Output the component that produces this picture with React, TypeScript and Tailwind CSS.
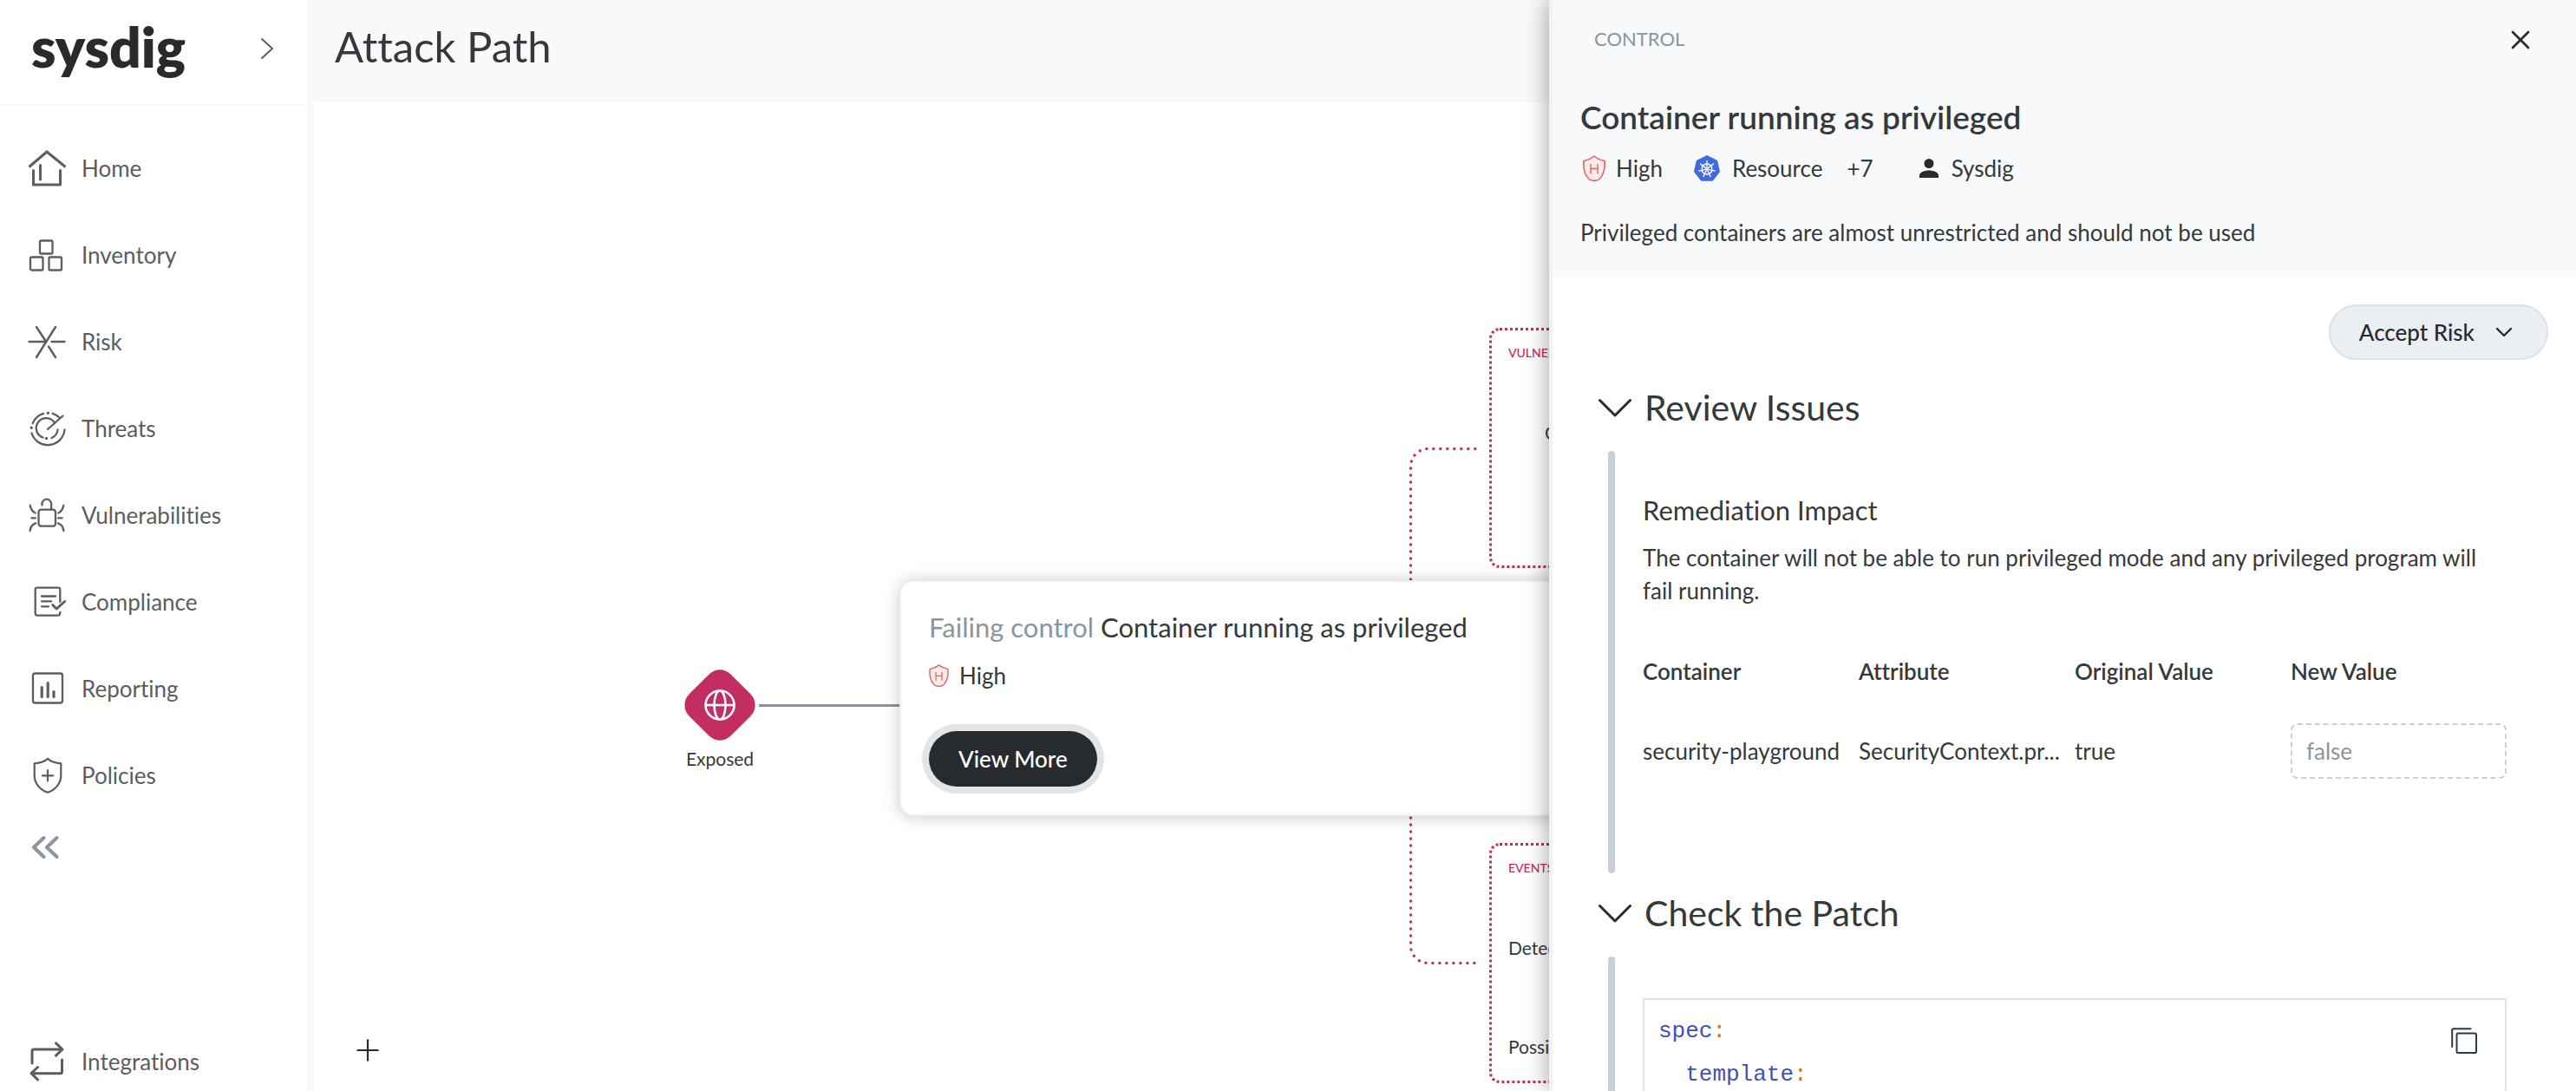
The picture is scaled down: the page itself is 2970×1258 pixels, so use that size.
import type { ReactNode } from "react";
import { ChevronDown, Plus, X } from "lucide-react";

function NavIcon({ width = 2, children }: { width?: number; children: ReactNode }) {
  return (
    <svg
      viewBox="0 0 44 44"
      className="size-11 shrink-0 overflow-visible"
      fill="none"
      stroke="currentColor"
      strokeWidth={width}
      strokeLinecap="round"
      strokeLinejoin="round"
      aria-hidden="true"
    >
      {children}
    </svg>
  );
}

const NAV: { label: string; icon: ReactNode }[] = [
  {
    label: "Home",
    icon: (
      <NavIcon width={3}>
        <path d="M1.5 20.5 22 3l21.5 17.5" strokeLinecap="butt" strokeLinejoin="miter" />
        <path d="M6.5 24.500V41h31V24.500M14.500 18.500V35" />
      </NavIcon>
    ),
  },
  {
    label: "Inventory",
    icon: (
      <NavIcon width={2.3}>
        <rect x="14" y="5.500" width="14.500" height="15" rx="1.500" />
        <rect x="3" y="24.500" width="14.500" height="15" rx="1.500" />
        <rect x="24.500" y="24.500" width="14.500" height="15" rx="1.500" />
      </NavIcon>
    ),
  },
  {
    label: "Risk",
    icon: (
      <NavIcon width={2.400}>
        <path d="M1.500 22H20M27.500 22H42.500M10 40 32 5M10 5 20.500 21M24 27.500 32 40" />
      </NavIcon>
    ),
  },
  {
    label: "Threats",
    icon: (
      <NavIcon width={2.300}>
        <path d="M42.500 23.500A19.500 19.500 0 0 1 4.500 27.500M5.700 16A19.500 19.500 0 0 1 18 4.800M28.700 4.800A19.500 19.500 0 0 1 36.500 9.500" />
        <path d="M31 15.500A11.500 11.500 0 1 0 17.500 32.500M34.500 23.500A11.500 11.500 0 0 1 27.500 33" />
        <path d="M23 23 40.500 7.500" />
        <g fill="currentColor" stroke="none">
          <circle cx="23.300" cy="4.300" r="1.700" />
          <circle cx="4.300" cy="21.300" r="1.700" />
          <circle cx="21.500" cy="33.500" r="1.700" />
        </g>
      </NavIcon>
    ),
  },
  {
    label: "Vulnerabilities",
    icon: (
      <NavIcon width={2.300}>
        <rect x="12.500" y="15.700" width="19.500" height="19" rx="3" />
        <path d="M16.500 10.500V9a5.300 5.300 0 0 1 10.600 0v6.500" />
        <path d="M2.700 10.700C3.500 15 5.500 18 8.700 19.500M4.300 25.300h4.700M2.700 40C3 36 5.500 32.500 9 31.300" />
        <path d="M41.300 10.700C40.500 15 38.500 18 35.300 19.500M39.700 25.300H35M41.300 40C41 36 38.500 32.500 35 31.300" />
      </NavIcon>
    ),
  },
  {
    label: "Compliance",
    icon: (
      <NavIcon width={2.300}>
        <path d="M37.300 22V8a2.300 2.300 0 0 0-2.300-2.300H11A2.300 2.300 0 0 0 8.700 8v27.300a2.300 2.300 0 0 0 2.300 2.300h24c1.500 0 2.300-1.300 2.300-3.600" />
        <path d="M16 15.500h16M16 21.300h11M16 27.300h8" />
        <path d="m28.700 25.500 4.500 4.500 9.500-8.500" strokeWidth="3" />
      </NavIcon>
    ),
  },
  {
    label: "Reporting",
    icon: (
      <NavIcon width={2.300}>
        <rect x="6" y="4.500" width="34" height="34" rx="2.500" />
        <path d="M16.200 20.500V31.500M23.200 15.500V31.500M30 25.500V31.500" strokeWidth="3.200" />
      </NavIcon>
    ),
  },
  {
    label: "Policies",
    icon: (
      <NavIcon width={2.200}>
        <path d="M23 2.800C19 7 13 8 7.700 8.300V22c0 10 7 17 15.300 19.700C31.300 39 38.300 32 38.300 22V8.300C33 8 27 7 23 2.800ZM23 16v12.500M16.800 22.300h12.500" />
      </NavIcon>
    ),
  },
];

function NavLink({ label, icon }: { label: string; icon: ReactNode }) {
  return (
    <a href="#" className="flex items-center gap-[18px] pl-8 text-[26px] leading-10">
      {icon}
      <span>{label}</span>
    </a>
  );
}

function Sidebar() {
  return (
    <aside className="flex w-[354px] shrink-0 flex-col bg-white text-[#5a5d61]">
      <div className="flex h-[122px] shrink-0 items-start justify-between border-b-2 border-[#f8f9fb] pr-9 pl-9">
        <span className="pt-4 text-[64px] leading-[76px] font-extrabold text-[#282b2e]">sysdig</span>
        <button type="button" aria-label="Switch product" className="pt-[42px]">
          <svg viewBox="0 0 20 28" className="h-7 w-5" fill="none" stroke="currentColor" strokeWidth="2" strokeLinecap="round" strokeLinejoin="round">
            <path d="m4 3 12 11L4 25" />
          </svg>
        </button>
      </div>
      <nav className="flex flex-1 flex-col pt-[22px]" aria-label="Main">
        {NAV.map((n) => (
          <div key={n.label} className="flex h-[100px] shrink-0 items-center">
            <NavLink {...n} />
          </div>
        ))}
        <button type="button" aria-label="Collapse menu" className="flex h-[66px] shrink-0 items-center pl-9 text-[#8c949d]">
          <svg viewBox="0 0 32 28" className="h-7 w-8" fill="none" stroke="currentColor" strokeWidth="4" strokeLinecap="round" strokeLinejoin="round">
            <path d="M14.500 3 3 14l11.500 11M29.500 3 18 14l11.500 11" />
          </svg>
        </button>
        <div className="mt-auto flex h-[68px] shrink-0 items-center">
          <NavLink
            label="Integrations"
            icon={
              <NavIcon width={3}>
                <path d="M5 24V10a2 2 0 0 1 2-2h32.500M32.500 .8 40 8l-7.500 7.200" />
                <path d="M39.500 20v13.700a2 2 0 0 1-2 2H4.500M11.500 28.500 4 35.700l7.500 7.200" />
              </NavIcon>
            }
          />
        </div>
      </nav>
    </aside>
  );
}

function HighShield({ className }: { className: string }) {
  return (
    <svg viewBox="0 0 26 30" className={className} fill="none" stroke="#e36259" strokeLinejoin="round" aria-hidden="true">
      <path d="M13 1C16 3.500 20.500 5.500 25 6.500 26 16 23 24 19 27.500c-2 1.600-4 1.800-6 1.800s-4-.2-6-1.800C3 24 0 16 1 6.500 5.500 5.500 10 3.500 13 1Z" fill="#fbecec" strokeWidth="1.600" />
      <path d="M9 10v11.500M17 10v11.500M9 15.500h8" strokeWidth="1.400" />
    </svg>
  );
}

function KubernetesIcon() {
  const spokes = [0, 1, 2, 3, 4, 5, 6];
  return (
    <svg viewBox="0 0 30 30" className="size-[30px]" aria-hidden="true">
      <path
        d="M15 1.500 26 6.800l2.700 12-7.600 9.700H8.900l-7.600-9.700L4 6.800Z"
        fill="#3f6bdf"
        stroke="#3f6bdf"
        strokeWidth="2.500"
        strokeLinejoin="round"
      />
      <g fill="none" stroke="#fff" strokeWidth="1.400" strokeLinecap="round">
        <circle cx="15" cy="16" r="6" />
        {spokes.map((i) => (
          <path key={i} d="M15 14.200V6.600" transform={"rotate(" + (i * 360) / 7 + " 15 16)"} />
        ))}
      </g>
      <circle cx="15" cy="16" r="1.600" fill="#fff" />
    </svg>
  );
}

function PersonIcon() {
  return (
    <svg viewBox="0 0 24 24" className="size-6" fill="#282b2e" aria-hidden="true">
      <circle cx="12" cy="6.500" r="5.500" />
      <path d="M1 23v-2.500C1 16.500 7 14.500 12 14.500s11 2 11 6V23Z" />
    </svg>
  );
}

function Canvas() {
  return (
    <div className="relative flex-1 overflow-hidden bg-white">
      <svg className="absolute top-0 left-0 h-[1140px] w-[1424px]" fill="none" aria-hidden="true">
        <path d="M513 695.500H680" stroke="#8c939c" strokeWidth="3" />
        <g stroke="#c22d62" strokeWidth="3.500" strokeLinecap="round" strokeDasharray="0 8">
          <path d="M1264.500 550V420a20 20 0 0 1 20-20.500H1345" />
          <path d="M1264.500 825V972a20 20 0 0 0 20 20.500H1345" />
        </g>
      </svg>

      <div className="absolute top-[648px] left-[408px] flex w-[120px] flex-col items-center">
        <div className="flex size-[94px] items-center justify-center">
          <div className="flex size-[68px] rotate-45 items-center justify-center rounded-[18px] bg-[#c22d62]">
            <svg viewBox="0 0 36 36" className="size-9 -rotate-45" fill="none" stroke="#fff" strokeWidth="2.600" aria-hidden="true">
              <circle cx="18" cy="18" r="16.500" />
              <ellipse cx="18" cy="18" rx="6.500" ry="16.500" />
              <path d="M2 18h32" />
            </svg>
          </div>
        </div>
        <span className="text-[21px] leading-[30px] text-[#36393c]">Exposed</span>
      </div>

      <section className="absolute top-[260px] left-[1355px] h-[277px] w-[420px] rounded-xl border-[3px] border-dotted border-[#c22d62] pt-3.5 pl-[19px]">
        <h2 className="text-[14px] leading-6 font-medium text-[#c22d62]">VULNERABILITIES</h2>
        <p className="mt-16 pl-[42px] text-[21px] leading-8 text-[#36393c]">Critical</p>
      </section>

      <section className="absolute top-[854px] left-[1355px] h-[277px] w-[420px] rounded-xl border-[3px] border-dotted border-[#c22d62] pt-3.5 pl-[19px]">
        <h2 className="text-[14px] leading-6 font-medium text-[#c22d62]">EVENTS</h2>
        <p className="mt-16 text-[21px] leading-8 text-[#36393c]">Detected</p>
        <p className="mt-[82px] text-[21px] leading-8 text-[#36393c]">Possible</p>
      </section>

      <article className="absolute top-[551px] left-[675px] w-[900px] rounded-2xl border-2 border-[#f0f0f1] bg-white px-8 pt-8 pb-8 shadow-[0_1px_18px_rgba(0,0,0,0.22)]">
        <h2 className="text-[31px] leading-10 text-[#36393c]">
          <span className="text-[#8c949d]">Failing control</span> Container running as privileged
        </h2>
        <div className="mt-4 flex h-10 items-center gap-3 text-[26px] text-[#36393c]">
          <HighShield className="h-[26px] w-[23px]" />
          <span>High</span>
        </div>
        <button
          type="button"
          className="mt-11 h-16 rounded-full bg-[#282b2e] px-[34px] text-[26px] leading-10 font-medium text-white shadow-[0_0_0_8px_#e3e4e6]"
        >
          View More
        </button>
      </article>

      <button
        type="button"
        aria-label="Zoom in"
        className="absolute bottom-[23px] left-[38px] flex size-12 items-center justify-center text-[#282b2e]"
      >
        <Plus size={40} strokeWidth={1.3} />
      </button>
    </div>
  );
}

function Section({ title, children }: { title: string; children: ReactNode }) {
  return (
    <section>
      <h2>
        <button type="button" aria-expanded="true" className="flex h-[60px] items-center gap-3.5 pl-[52px] text-[41px] text-[#36393c]">
          <svg viewBox="0 0 40 24" className="h-6 w-10" fill="none" stroke="#282b2e" strokeWidth="3" strokeLinecap="round" strokeLinejoin="round" aria-hidden="true">
            <path d="m2.500 3.500 17.500 17.500L37.500 3.500" />
          </svg>
          {title}
        </button>
      </h2>
      <div className="mt-5 flex gap-8 pr-20 pl-16">
        <div className="w-2 shrink-0 rounded-full bg-[#c8cfd8]" />
        <div className="min-w-0 flex-1">{children}</div>
      </div>
    </section>
  );
}

function ControlPanel() {
  return (
    <aside
      aria-label="Control details"
      className="absolute inset-y-0 right-0 w-[1184px] overflow-hidden border-l-4 border-[#f1f2f4] bg-white text-[#36393c] shadow-[-2px_0_24px_rgba(0,0,0,0.35)]"
    >
      <header className="bg-[#f8f9fb] pb-8">
        <div className="flex h-[92px] items-center justify-between pr-10 pl-12">
          <span className="pb-1 text-[22px] text-[#8c949d]">CONTROL</span>
          <button type="button" aria-label="Close" className="flex size-12 items-center justify-center text-[#282b2e]">
            <X size={36} strokeWidth={1.8} />
          </button>
        </div>
        <div className="px-8 pt-5">
          <h1 className="text-[37px] leading-[46px] font-semibold">Container running as privileged</h1>
          <div className="mt-4 flex h-10 items-center text-[26px]">
            <span className="flex items-center gap-3 pl-[3px]">
              <HighShield className="h-[30px] w-[26px]" />
              High
            </span>
            <span className="flex items-center gap-3.5 pl-9">
              <KubernetesIcon />
              Resource
            </span>
            <span className="pl-7">+7</span>
            <span className="flex items-center gap-3.5 pl-[52px]">
              <PersonIcon />
              Sysdig
            </span>
          </div>
          <p className="mt-[35px] text-[26px] leading-[38px]">
            Privileged containers are almost unrestricted and should not be used
          </p>
        </div>
      </header>

      <div className="flex justify-end pt-8 pr-8">
        <button
          type="button"
          className="flex h-16 items-center gap-[18px] rounded-full border-2 border-[#dde2e7] bg-[#ebeef3] px-[33px] text-[26px] font-medium text-[#282b2e]"
        >
          Accept Risk
          <ChevronDown size={32} strokeWidth={1.8} />
        </button>
      </div>

      <div className="mt-[25px]">
        <Section title="Review Issues">
          <div className="pt-12 pb-[79px]">
            <h3 className="text-[31px] leading-10">Remediation Impact</h3>
            <p className="mt-4 text-[26px] leading-[38px]">
              The container will not be able to run privileged mode and any privileged program will fail running.
            </p>
            <table className="mt-11 w-full table-fixed text-left text-[26px]">
              <thead>
                <tr className="h-[60px]">
                  <th className="font-semibold">Container</th>
                  <th className="font-semibold">Attribute</th>
                  <th className="font-semibold">Original Value</th>
                  <th className="font-semibold">New Value</th>
                </tr>
              </thead>
              <tbody>
                <tr>
                  <td className="truncate py-[30px] pr-4">security-playground</td>
                  <td className="truncate py-[30px] pr-4">SecurityContext.pr...</td>
                  <td className="truncate py-[30px] pr-4">true</td>
                  <td className="py-[30px]">
                    <input
                      type="text"
                      readOnly
                      aria-label="New value"
                      value="false"
                      className="block h-16 w-full rounded-lg border-2 border-dashed border-[#c8cfd8] pl-4 text-[26px] text-[#8c949d]"
                    />
                  </td>
                </tr>
              </tbody>
            </table>
          </div>
        </Section>
        <div className="mt-4">
          <Section title="Check the Patch">
            <div className="pt-12">
              <div className="flex h-64 items-start justify-between border-2 border-[#dde2e7]">
                <pre className="pt-2.5 pl-4 font-['DejaVu_Sans_Mono',monospace] text-[26px] leading-[48px] text-[#3f51b5]">
                  <code>
                    spec<span className="text-[#c8742b]">:</span>
                    {"\n  template"}
                    <span className="text-[#c8742b]">:</span>
                  </code>
                </pre>
                <div className="pt-6 pr-6">
                  <button type="button" aria-label="Copy patch" className="p-2 text-[#2b3a4a]">
                    <svg viewBox="0 0 30 30" className="size-[30px]" fill="none" stroke="currentColor" strokeWidth="2" strokeLinecap="round" strokeLinejoin="round">
                      <rect x="6.500" y="6.500" width="22.500" height="22.500" rx="1.500" />
                      <path d="M1.200 22V2.700a1.500 1.500 0 0 1 1.500-1.500H22.500" />
                    </svg>
                  </button>
                </div>
              </div>
            </div>
          </Section>
        </div>
      </div>
    </aside>
  );
}

export default function App() {
  return (
    <div className="relative flex h-screen overflow-hidden bg-white font-['Lato',sans-serif] [font-variant-ligatures:none]">
      <Sidebar />
      <main className="flex min-w-0 flex-1 flex-col border-l-8 border-[#f8f9fb]">
        <header className="flex h-[118px] shrink-0 items-center bg-[#f8f9fb] pb-3 pl-6">
          <h1 className="text-[49px] leading-[60px] text-[#36393c]">Attack Path</h1>
        </header>
        <Canvas />
      </main>
      <ControlPanel />
    </div>
  );
}
